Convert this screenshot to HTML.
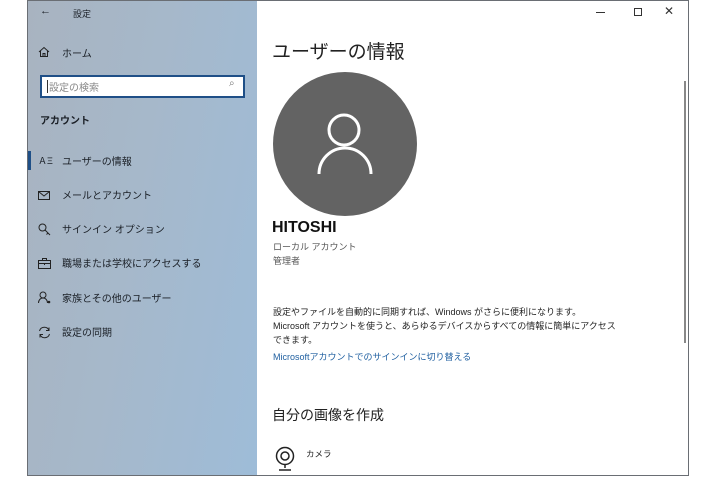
<!DOCTYPE html>
<html><head><meta charset="utf-8"><style>
*{margin:0;padding:0;box-sizing:border-box}
body{width:715px;height:477px;background:#fff;position:relative;overflow:hidden;font-family:"Liberation Sans","Noto Sans CJK JP",sans-serif;color:#111}
.win{position:absolute;left:27px;top:0;width:662px;height:476px;border:1px solid #6a6e74;background:#fff}
.side{position:absolute;left:0;top:0;width:229px;height:100%;background:linear-gradient(100deg,#a8b3c0 0%,#a6b8ca 45%,#9ebcd8 100%)}
.side .t{position:absolute;font-size:10px;color:#1a1f26;white-space:nowrap}
.ic{position:absolute;left:10px}
.main .t{position:absolute;white-space:nowrap}
</style></head><body>
<div class="win">
<div class="side">
 <div class="t" style="left:12px;top:4px;font-size:11px">←</div>
 <div class="t" style="left:45px;top:6px;font-size:9px">設定</div>
 <svg class="ic" style="top:45px" width="12" height="12" viewBox="0 0 12 12" fill="none" stroke="#222" stroke-width="1"><path d="M1 6L6 1.5 11 6M2.5 5v5.5h7V5M5 10.5V7.5h2v3"/></svg>
 <div class="t" style="left:34px;top:44px">ホーム</div>
 <div style="position:absolute;left:12px;top:74px;width:205px;height:23px;background:#fff;border:2px solid #1f4f87"></div>
 <div style="position:absolute;left:19px;top:79px;width:1px;height:13px;background:#333"></div>
 <div class="t" style="left:21px;top:78px;color:#888;font-size:10px">設定の検索</div>
 <div class="t" style="left:201px;top:77px;color:#777;font-size:10px">⌕</div>
 <div class="t" style="left:12px;top:111px;font-weight:bold">アカウント</div>
 <div style="position:absolute;left:0;top:150px;width:3px;height:19px;background:#1f4f87"></div>
 <div class="t" style="left:10px;top:153px;font-size:9px">ＡΞ</div>
 <div class="t" style="left:34px;top:152px">ユーザーの情報</div>
 <svg class="ic" style="top:190px" width="12" height="10" viewBox="0 0 12 10" fill="none" stroke="#222"><rect x=".5" y=".5" width="11" height="8"/><path d="M.5 .5L6 5 11.5.5"/></svg>
 <div class="t" style="left:34px;top:186px">メールとアカウント</div>
 <svg class="ic" style="top:222px" width="13" height="13" viewBox="0 0 13 13" fill="none" stroke="#222"><circle cx="4.5" cy="4.5" r="3.5"/><path d="M7 7l5 5M10 10l-1.5 1.5"/></svg>
 <div class="t" style="left:34px;top:220px">サインイン オプション</div>
 <svg class="ic" style="top:257px" width="13" height="11" viewBox="0 0 13 11" fill="none" stroke="#222"><rect x=".5" y="2.5" width="12" height="8"/><path d="M4.5 2.5V.5h4v2M.5 5.5h12M6.5 5v2"/></svg>
 <div class="t" style="left:34px;top:254px">職場または学校にアクセスする</div>
 <svg class="ic" style="top:290px" width="13" height="13" viewBox="0 0 13 13" fill="none" stroke="#222"><circle cx="5" cy="4" r="3"/><path d="M.5 12c0-3 2-5 4.5-5s4.5 2 4.5 5"/><circle cx="11" cy="11" r=".8" fill="#222"/></svg>
 <div class="t" style="left:34px;top:289px">家族とその他のユーザー</div>
 <svg class="ic" style="top:325px" width="13" height="13" viewBox="0 0 13 13" fill="none" stroke="#222"><path d="M1.5 5A5 5 0 0 1 11 4.5M11.5 8A5 5 0 0 1 2 8.5"/><path d="M11 1.5v3h-3M2 11.5v-3h3"/></svg>
 <div class="t" style="left:34px;top:323px">設定の同期</div>
</div>
<div class="main">
 <div style="position:absolute;left:568px;top:11px;width:9px;height:1px;background:#333"></div>
 <div style="position:absolute;left:606px;top:7px;width:8px;height:8px;border:1px solid #333"></div>
 <div class="t" style="left:636px;top:3px;font-size:12px;color:#333">✕</div>
 <div style="position:absolute;left:656px;top:80px;width:2px;height:262px;background:#888"></div>
 <div class="t" style="left:244px;top:36px;font-size:19px;color:#222">ユーザーの情報</div>
 <svg style="position:absolute;left:245px;top:71px" width="145" height="145" viewBox="0 0 145 145"><circle cx="72" cy="72" r="72" fill="#636363"/><circle cx="71" cy="58" r="15" fill="none" stroke="#fff" stroke-width="3"/><path d="M46 102a26 26 0 0 1 52 0" fill="none" stroke="#fff" stroke-width="3"/></svg>
 <div class="t" style="left:244px;top:218px;font-size:16px;font-weight:bold;color:#111">HITOSHI</div>
 <div class="t" style="left:245px;top:239px;font-size:9px;color:#555">ローカル アカウント</div>
 <div class="t" style="left:245px;top:253px;font-size:9px;color:#555">管理者</div>
 <div class="t" style="left:245px;top:304px;font-size:9px;line-height:14px;color:#222">設定やファイルを自動的に同期すれば、Windows がさらに便利になります。<br>Microsoft アカウントを使うと、あらゆるデバイスからすべての情報に簡単にアクセス<br>できます。</div>
 <div class="t" style="left:245px;top:349px;font-size:9px;color:#1f5fa0">Microsoftアカウントでのサインインに切り替える</div>
 <div class="t" style="left:244px;top:404px;font-size:14px;color:#222">自分の画像を作成</div>
 <svg style="position:absolute;left:247px;top:445px" width="20" height="26" viewBox="0 0 20 26" fill="none" stroke="#222" stroke-width="1.5"><circle cx="10" cy="10" r="8.5"/><circle cx="10" cy="10" r="4"/><path d="M10 19v3M4 24h12"/></svg>
 <div class="t" style="left:278px;top:447px;font-size:8.5px;color:#222">カメラ</div>
</div>
</div>
</body></html>
